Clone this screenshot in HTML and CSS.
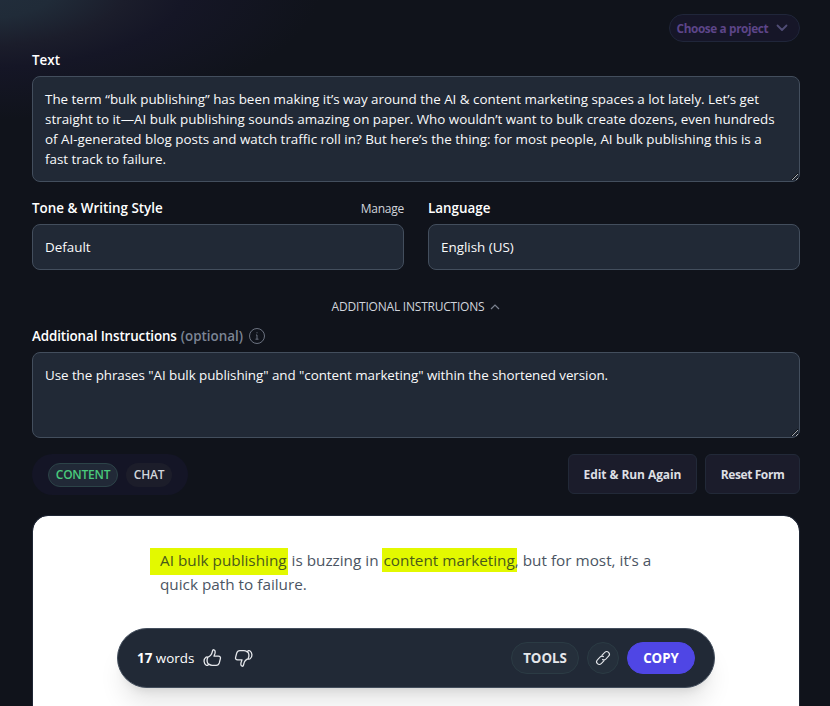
FILE: index.html
```html
<!DOCTYPE html>
<html lang="en">
<head>
    <meta charset="UTF-8" />
    <meta name="viewport" content="width=device-width, initial-scale=1.0"/>
    <title>Text Shortener</title>
    <link rel="stylesheet" href="styles.css">
</head>
<body>

<main class="page">
    <div class="topbar">
        <button class="project-btn" type="button">
            <span>Choose a project</span>
            <svg width="12" height="8" viewBox="0 0 12 8" fill="none" stroke="currentColor" stroke-width="1.8" stroke-linecap="round" stroke-linejoin="round"><path d="M1.5 1.5 6 6l4.5-4.5"/></svg>
        </button>
    </div>

    <form class="tool-form">
        <label class="field-label" for="text">Text</label>
        <textarea class="field text-field" id="text" spellcheck="false">The term “bulk publishing” has been making it’s way around the AI &amp; content marketing spaces a lot lately. Let’s get
straight to it—AI bulk publishing sounds amazing on paper. Who wouldn’t want to bulk create dozens, even hundreds
of AI-generated blog posts and watch traffic roll in? But here’s the thing: for most people, AI bulk publishing this is a
fast track to failure.</textarea>

        <div class="field-row">
            <div class="field-col">
                <div class="label-row">
                    <span class="field-label">Tone &amp; Writing Style</span>
                    <a class="manage">Manage</a>
                </div>
                <div class="field select">Default</div>
            </div>
            <div class="field-col">
                <div class="label-row">
                    <span class="field-label">Language</span>
                </div>
                <div class="field select">English (US)</div>
            </div>
        </div>

        <div class="toggle-row">
            <span class="toggle-text">ADDITIONAL INSTRUCTIONS</span>
            <svg width="10" height="6" viewBox="0 0 10 6" fill="none" stroke="currentColor" stroke-width="1.2"><path d="M1 5 5 1l4 4"/></svg>
        </div>

        <label class="field-label extra-label" for="extra">
            <span class="extra-title">Additional Instructions</span>
            <span class="optional">(optional)</span>
            <svg class="info" width="18" height="18" viewBox="0 0 18 18" fill="none" stroke="currentColor"><circle cx="9" cy="9" r="7.5"/><path d="M8 8h1v4M7.5 12.2h3M8.5 5.8h1"/></svg>
        </label>
        <textarea class="field extra-field" id="extra" spellcheck="false">Use the phrases "AI bulk publishing" and "content marketing" within the shortened version.</textarea>
    </form>

    <div class="actions">
        <div class="tabs">
            <a class="tab active">CONTENT</a>
            <a class="tab">CHAT</a>
        </div>
        <div class="buttons">
            <button class="btn edit-btn" type="button"><span>Edit &amp; Run Again</span></button>
            <button class="btn reset-btn" type="button"><span>Reset Form</span></button>
        </div>
    </div>

    <section class="result">
        <p class="result-text"><mark class="lead">AI bulk publishing</mark> is buzzing in <mark>content marketing</mark>, but for most, it’s a<br>quick path to failure.</p>

        <div class="result-bar">
            <span class="words"><b>17</b> words</span>
            <svg class="thumb" width="20" height="20" viewBox="0 0 20 20"><path d="M5.4 9.3C8 8.5 9.7 6.6 10.2 4.2c.3-1.6.6-2.6 1.6-2.4 1.3.3 1.6 1.9 1.2 3.4l-1 2.9h4.4c1.6 0 2.4 1 2 2.6l-1.1 4.2c-.5 1.7-1.5 2.5-3.1 2.5h-4.1c-1.7 0-2.4-.6-3.7-1.5M3.9 9.2c.7-.5 1.6-.4 1.9.2-1.1 2.3-.9 4.8.6 6.9.1.9-1.4 1.5-2.2.9C1.5 15.4 1.3 11.2 3.9 9.2z"/></svg>
            <svg class="thumb down" width="20" height="20" viewBox="0 0 20 20"><path d="M5.4 9.3C8 8.5 9.7 6.6 10.2 4.2c.3-1.6.6-2.6 1.6-2.4 1.3.3 1.6 1.9 1.2 3.4l-1 2.9h4.4c1.6 0 2.4 1 2 2.6l-1.1 4.2c-.5 1.7-1.5 2.5-3.1 2.5h-4.1c-1.7 0-2.4-.6-3.7-1.5M3.9 9.2c.7-.5 1.6-.4 1.9.2-1.1 2.3-.9 4.8.6 6.9.1.9-1.4 1.5-2.2.9C1.5 15.4 1.3 11.2 3.9 9.2z"/></svg>
            <div class="bar-actions">
                <button class="pill tools" type="button"><span>TOOLS</span></button>
                <button class="pill link" type="button">
                    <svg width="18" height="18" viewBox="0 0 18 18" fill="none" stroke="currentColor" stroke-width="1.1"><g transform="rotate(-45 9 9)"><path d="M8.2 11.7H3.8a2.7 2.7 0 0 1 0-5.4h4a2.7 2.7 0 0 1 2.6 2.4"/><path d="M9.8 6.3h4.4a2.7 2.7 0 0 1 0 5.4h-4a2.7 2.7 0 0 1-2.6-2.4"/></g></svg>
                </button>
                <button class="pill copy" type="button"><span>COPY</span></button>
            </div>
        </div>
    </section>
</main>

</body>
</html>
```
FILE: styles.css
```css
* {
    box-sizing:border-box;
}

body {
    margin:0;
    height:706px;
    overflow:hidden;
    font-family:"Open Sans", "Noto Sans", sans-serif;
    font-size:13.4px;
    line-height:20px;
    color:#fff;
    background:
        radial-gradient(ellipse 340px 130px at -20px -10px, #222e3c 0%, #202b38 22%, #1b1d2b 43%, #151626 60%, rgba(16,19,27,0) 100%),
        #10131b;
}

button {
    font-family:inherit;
    cursor:pointer;
}

.page {
    padding:14px 30px 0 32px;
}

.topbar {
    display:flex;
    justify-content:flex-end;
}

.project-btn {
    display:flex;
    align-items:center;
    gap:8px;
    width:131px;
    height:28px;
    padding:0 0 0 6.5px;
    border:1px solid #20263a;
    border-radius:14px;
    background:#161628;
    color:#5d4589;
    font-size:11.8px;
    font-weight:700;
    letter-spacing:-0.38px;
    white-space:nowrap;
}

.project-btn svg {
    color:#504d76;
}

.tool-form {
    display:flex;
    flex-direction:column;
}

.field-label {
    font-size:13.4px;
    font-weight:600;
    white-space:nowrap;
}

.tool-form > .field-label {
    margin:8px 0 6px;
}

.field {
    width:100%;
    border:1px solid #434e5d;
    border-radius:8px;
    background:#212936;
    color:#f9fafb;
    padding:12px;
    font-family:inherit;
    font-size:13.4px;
    line-height:20px;
}

textarea.field {
    display:block;
    resize:both;
    outline:none;
    overflow:hidden;
    white-space:pre;
}

.text-field {
    height:106px;
}

.extra-field {
    height:86px;
    letter-spacing:-0.06px;
}

.field-row {
    display:grid;
    grid-template-columns:1fr 1fr;
    gap:24px;
    margin-top:16px;
}

.label-row {
    display:flex;
    justify-content:space-between;
    align-items:center;
    height:20px;
    margin-bottom:6px;
}

.manage {
    padding-top:2px;
    font-size:12px;
    letter-spacing:-0.25px;
    color:#d1d5db;
}

.select {
    height:46px;
}

.toggle-row {
    display:flex;
    justify-content:center;
    align-items:center;
    gap:6px;
    height:20px;
    margin-top:27px;
    font-size:12px;
    letter-spacing:-0.22px;
    color:#d1d5db;
}

.toggle-row svg {
    color:#7b8290;
}

.tool-form > .extra-label {
    display:flex;
    align-items:center;
    gap:4px;
    height:20px;
    margin:9px 0 6px;
}

.extra-title {
    letter-spacing:-0.12px;
}

.optional {
    color:#7c8594;
}

.info {
    margin-left:1px;
    color:#6b7280;
}

.actions {
    display:flex;
    justify-content:space-between;
    margin-top:16px;
}

.tabs {
    display:flex;
    align-items:center;
    gap:8px;
    width:156px;
    height:41px;
    padding:0 16px;
    border-radius:21px;
    background:#141526;
}

.tab {
    width:46px;
    height:24px;
    line-height:23px;
    text-align:center;
    border-radius:12px;
    background:#1c1d2a;
    color:#d1d5db;
    font-size:12px;
    font-weight:600;
    letter-spacing:-0.25px;
}

.tab.active {
    width:70px;
    line-height:22px;
    border:1px solid #2c4348;
    background:#212937;
    color:#4ac97c;
}

.buttons {
    display:flex;
    gap:8px;
}

.btn {
    height:40px;
    padding:0;
    border:1px solid #222938;
    border-radius:6px;
    background:#1b1c2b;
    color:#dddfe3;
    font-size:12px;
    font-weight:700;
    letter-spacing:-0.08px;
    white-space:nowrap;
}

.edit-btn {
    width:129px;
}

.reset-btn {
    width:95px;
    letter-spacing:-0.4px;
}

.result {
    height:191px;
    margin-top:20px;
    padding:32px 84px 0;
    border:1px solid #1f2634;
    border-bottom:0;
    border-radius:16px 16px 0 0;
    background:#fff;
    background-clip:padding-box;
}

.result-text {
    margin:0 0 0 43px;
    font-size:15.3px;
    line-height:24px;
    color:#4b5563;
    white-space:nowrap;
}

mark {
    padding:2px 2px 2px 2px;
    margin:0 -2px 0 -1px;
    background:#e3f900;
    color:#495a1b;
}

.lead {
    padding:2px 1px 5px 10px;
    margin:0 0 0 -10px;
}

.result-bar {
    display:flex;
    align-items:center;
    height:60px;
    margin-top:32px;
    padding:0 19px;
    border:1px solid #434e5d;
    border-radius:30px;
    background:#212936;
    box-shadow:0 20px 25px -5px rgba(0,0,0,.1), 0 8px 10px -6px rgba(0,0,0,.1);
}

.words {
    margin-right:8px;
    white-space:nowrap;
}

.thumb {
    fill:none;
    stroke:#e5e7eb;
    stroke-width:1.3;
    stroke-linejoin:round;
    stroke-linecap:round;
}

.thumb.down {
    margin-left:12px;
    transform:rotate(180deg);
}

.bar-actions {
    display:flex;
    gap:8px;
    margin-left:auto;
}

.pill {
    display:flex;
    align-items:center;
    justify-content:center;
    width:68px;
    height:32px;
    padding:0;
    border:1px solid #2b3b44;
    border-radius:16px;
    background:#252f3b;
    color:#e5e7eb;
    font-size:13.3px;
    font-weight:700;
}

.link {
    width:32px;
}

.copy {
    border-color:#4f46e5;
    background:#4f46e5;
    color:#fff;
}
```
